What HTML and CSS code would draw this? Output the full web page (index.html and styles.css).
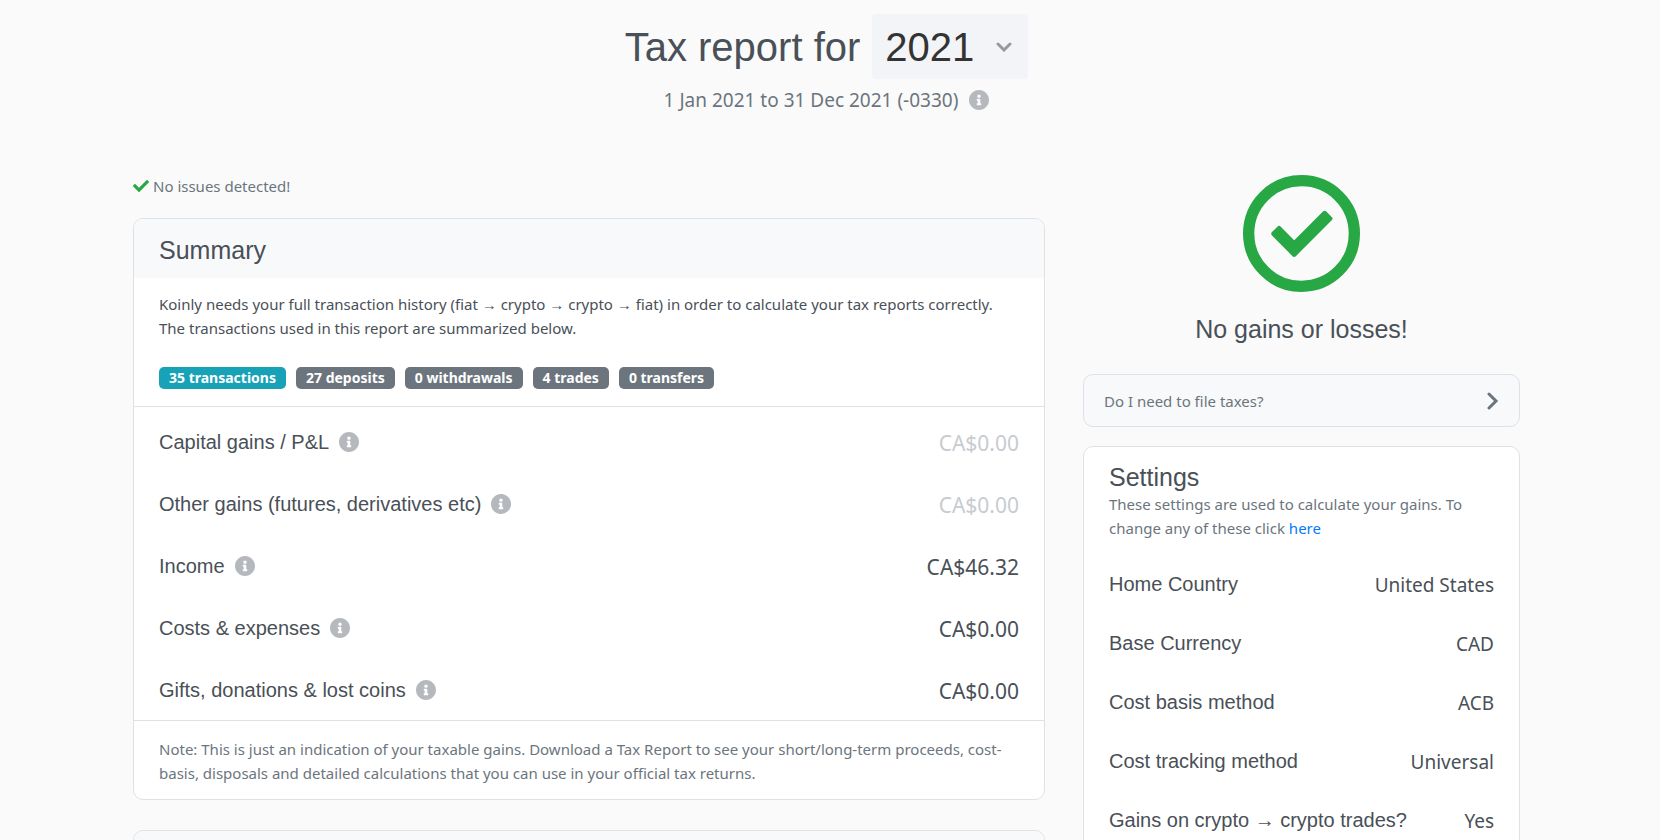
FILE: index.html
```html
<!DOCTYPE html>
<html lang="en">
<head>
<meta charset="utf-8">
<meta name="viewport" content="width=device-width, initial-scale=1">
<title>Tax report</title>
<link rel="stylesheet" href="styles.css">
</head>
<body>
<svg class="sprite" aria-hidden="true">
  <symbol id="info" viewBox="8 8 496 496"><path d="M256 8C119.043 8 8 119.083 8 256c0 136.997 111.043 248 248 248s248-111.003 248-248C504 119.083 392.957 8 256 8zm0 110c23.196 0 42 18.804 42 42s-18.804 42-42 42-42-18.804-42-42 18.804-42 42-42zm56 254c0 6.627-5.373 12-12 12h-88c-6.627 0-12-5.373-12-12v-24c0-6.627 5.373-12 12-12h12v-64h-12c-6.627 0-12-5.373-12-12v-24c0-6.627 5.373-12 12-12h64c6.627 0 12 5.373 12 12v100h12c6.627 0 12 5.373 12 12v24z"/></symbol>
</svg>
<main class="page">
  <header class="report-header">
    <div class="title-row">
      <h1 class="title"><label for="year">Tax report for</label></h1>
      <div class="year">
        <select id="year" class="year-select"><option>2021</option></select>
        <svg class="year-arrow" viewBox="0 0 16 10" aria-hidden="true"><path d="M2 2l6 6 6-6"/></svg>
      </div>
    </div>
    <p class="period">1 Jan 2021 to 31 Dec 2021 (-0330) <svg class="info"><use href="#info"/></svg></p>
  </header>

  <div class="columns">
    <section class="main-column">
      <p class="status"><svg class="status-icon" viewBox="0 0 512 512" aria-hidden="true"><path d="M173.898 439.404l-166.4-166.4c-9.997-9.997-9.997-26.206 0-36.204l36.203-36.204c9.997-9.998 26.207-9.998 36.204 0L192 312.69 432.095 72.596c9.997-9.997 26.207-9.997 36.204 0l36.203 36.204c9.997 9.997 9.997 26.206 0 36.204l-294.4 294.401c-9.998 9.997-26.207 9.997-36.204-.001z"/></svg>No issues detected!</p>

      <article class="card">
        <header class="card-header"><h2 class="heading">Summary</h2></header>
        <div class="intro">
          <p class="text">Koinly needs your full transaction history (fiat → crypto → crypto → fiat) in order to calculate your tax reports correctly. The transactions used in this report are summarized below.</p>
          <div class="badges">
            <span class="badge badge-info">35 transactions</span>
            <span class="badge">27 deposits</span>
            <span class="badge">0 withdrawals</span>
            <span class="badge">4 trades</span>
            <span class="badge">0 transfers</span>
          </div>
        </div>
        <dl class="totals">
          <div class="row"><dt class="label">Capital gains / P&amp;L <svg class="info"><use href="#info"/></svg></dt><dd class="amount amount-muted">CA$0.00</dd></div>
          <div class="row"><dt class="label">Other gains (futures, derivatives etc) <svg class="info"><use href="#info"/></svg></dt><dd class="amount amount-muted">CA$0.00</dd></div>
          <div class="row"><dt class="label">Income <svg class="info"><use href="#info"/></svg></dt><dd class="amount">CA$46.32</dd></div>
          <div class="row"><dt class="label">Costs &amp; expenses <svg class="info"><use href="#info"/></svg></dt><dd class="amount">CA$0.00</dd></div>
          <div class="row"><dt class="label">Gifts, donations &amp; lost coins <svg class="info"><use href="#info"/></svg></dt><dd class="amount">CA$0.00</dd></div>
        </dl>
        <footer class="note"><p class="text muted">Note: This is just an indication of your taxable gains. Download a Tax Report to see your short/long-term proceeds, cost-basis, disposals and detailed calculations that you can use in your official tax returns.</p></footer>
      </article>

      <article class="card next-card"><header class="card-header"></header></article>
    </section>

    <aside class="side-column">
      <div class="result">
        <svg class="result-icon" viewBox="8 8 496 496" aria-hidden="true"><circle cx="256" cy="256" r="224"/><path d="M138 257l23-23 64 65 129-129 23 23-152 152z"/></svg>
        <h2 class="heading">No gains or losses!</h2>
      </div>
      <button type="button" class="question">Do I need to file taxes?
        <svg class="question-icon" viewBox="0 0 12 18" aria-hidden="true"><path d="M2 2l7 7-7 7"/></svg>
      </button>
      <article class="card settings">
        <h2 class="heading">Settings</h2>
        <p class="text muted">These settings are used to calculate your gains. To change any of these click <a class="link" href="#settings">here</a></p>
        <dl class="options">
          <div class="option"><dt class="label">Home Country</dt><dd class="value">United States</dd></div>
          <div class="option"><dt class="label">Base Currency</dt><dd class="value">CAD</dd></div>
          <div class="option"><dt class="label">Cost basis method</dt><dd class="value">ACB</dd></div>
          <div class="option"><dt class="label">Cost tracking method</dt><dd class="value">Universal</dd></div>
          <div class="option"><dt class="label">Gains on crypto → crypto trades?</dt><dd class="value">Yes</dd></div>
        </dl>
      </article>
    </aside>
  </div>
</main>
</body>
</html>
```

FILE: styles.css
```css
* { box-sizing: border-box; }
html { scrollbar-width: none; }
body {
  margin: 0;
  background: #fafafa;
  color: #495057;
  font: 15px/24px "Noto Sans", "Open Sans", "Liberation Sans", sans-serif;
}
h1, h2, p, dl, dd { margin: 0; }
.sprite { position: absolute; width: 0; height: 0; }
.page { padding: 14px 140px 32px 133px; }

.report-header { display: flex; flex-direction: column; align-items: center; }
.title-row { display: flex; align-items: center; gap: 12px; }
.title { font: 400 40px/48px "Liberation Sans", Arial, sans-serif; }
.year { position: relative; }
.year-select {
  appearance: none;
  display: block;
  height: 65px;
  padding: 0 54px 0 13px;
  border: 0;
  border-radius: 4px;
  background: #f3f4f7;
  color: #333;
  font: 40px/48px "Liberation Sans", Arial, sans-serif;
}
.year-arrow {
  position: absolute;
  top: 28px;
  right: 16px;
  width: 16px;
  height: 10px;
  fill: none;
  stroke: #999;
  stroke-width: 3;
  stroke-linecap: round;
  pointer-events: none;
}
.period {
  display: flex;
  align-items: center;
  gap: 11px;
  margin-top: 6px;
  color: #6c757d;
  font-size: 19px;
  line-height: 30px;
}
.info { flex: none; width: 20px; height: 20px; fill: #b5b9be; }

.columns {
  display: grid;
  grid-template-columns: minmax(0, 912fr) minmax(0, 437fr);
  gap: 38px;
  margin-top: 59px;
}
.status { display: flex; align-items: center; gap: 4px; color: #6c757d; }
.status-icon { width: 16px; height: 16px; fill: #28a745; }

.card {
  overflow: hidden;
  border: 1px solid #dee2e6;
  border-radius: 10px;
  background: #fff;
}
.main-column .card { margin-top: 20px; }
.card-header { padding: 16px 25px 13px; background: #f8f9fb; }
.heading { font: 400 25px/30px "Liberation Sans", Arial, sans-serif; }
.intro { padding: 14px 25px 17px; border-bottom: 1px solid #dee2e6; }
.muted { color: #6c757d; }
.badges { display: flex; flex-wrap: wrap; gap: 10px; margin-top: 27px; }
.badge {
  padding: 0 10px;
  border-radius: 5px;
  background: #6c757d;
  color: #fff;
  font-size: 14px;
  font-weight: 700;
  line-height: 22px;
}
.badge-info { background: #17a2b8; }

.totals {
  display: grid;
  gap: 32px;
  padding: 21px 25px 14px;
}
.row, .option { display: flex; align-items: flex-start; justify-content: space-between; }
.label {
  display: flex;
  align-items: center;
  gap: 10px;
  font: 20px/28px "Liberation Sans", Arial, sans-serif;
}
.amount { font-size: 21px; line-height: 30px; }
.amount-muted { color: #c8cbd0; }
.note { padding: 16px 25px 14px; border-top: 1px solid #dee2e6; }
.main-column .next-card { margin-top: 30px; }
.next-card .card-header { min-height: 58px; }

.result { display: flex; flex-direction: column; align-items: center; gap: 22px; padding-top: 1px; }
.result-icon { width: 117px; height: 117px; fill: #28a745; stroke: #28a745; stroke-width: 20; stroke-linejoin: round; }
.result-icon circle { fill: none; stroke-width: 48; }
.question {
  display: flex;
  align-items: center;
  justify-content: space-between;
  width: 100%;
  margin-top: 30px;
  padding: 14px 20px 13px;
  border: 1px solid #dee2e6;
  border-radius: 10px;
  background: #f8f9fb;
  color: #6c757d;
  font: inherit;
}
.question-icon { width: 12px; height: 18px; fill: none; stroke: #6c757d; stroke-width: 3; stroke-linecap: round; }
.settings { margin-top: 19px; padding: 15px 25px; }
.link { color: #007bff; text-decoration: none; }
.options { display: grid; gap: 29px; margin-top: 30px; }
.value { font-size: 19px; line-height: 30px; }
```
